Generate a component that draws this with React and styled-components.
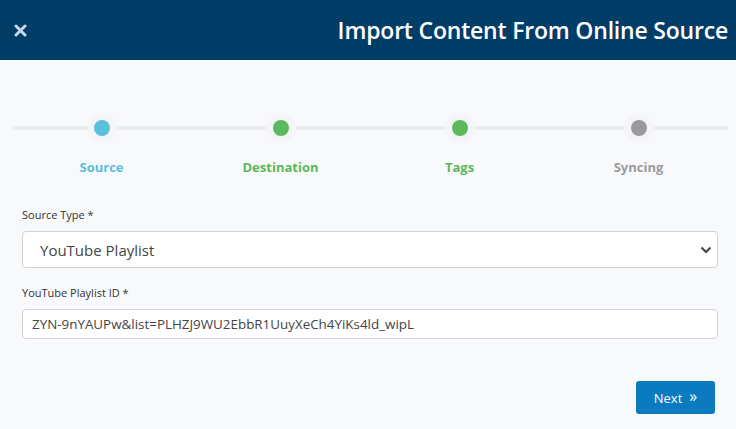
import React, { useState } from "react";
import styled, { createGlobalStyle } from "styled-components";

const GlobalStyle = createGlobalStyle`
  html, body {
    margin: 0;
    padding: 0;
    background: #f8f9fb;
    font-family: "Open Sans", "Noto Sans", sans-serif;
  }
  * { box-sizing: border-box; }
`;

const steps = [
  { label: "Source", color: "#5bc0de" },
  { label: "Destination", color: "#5cb85c" },
  { label: "Tags", color: "#5cb85c" },
  { label: "Syncing", color: "#9a9a9d" },
];

export default function App() {
  const [sourceType, setSourceType] = useState("youtube-playlist");
  const [playlistId, setPlaylistId] = useState(
    "ZYN-9nYAUPw&list=PLHZJ9WU2EbbR1UuyXeCh4YiKs4ld_wipL"
  );

  return (
    <>
      <GlobalStyle />
      <Modal>
        <Header>
          <CloseButton aria-label="close">
            <svg width="13" height="13" viewBox="0 0 13 13">
              <path
                d="M2 2 L11 11 M11 2 L2 11"
                stroke="#c9d8e6"
                strokeWidth="3"
                strokeLinecap="round"
              />
            </svg>
          </CloseButton>
          <Title>Import Content From Online Source</Title>
        </Header>
        <Body>
          <Stepper>
            {steps.map((step) => (
              <Step key={step.label}>
                <Track>
                  <Dot color={step.color} />
                </Track>
                <StepLabel color={step.color}>{step.label}</StepLabel>
              </Step>
            ))}
          </Stepper>
          <Form>
            <Field>
              <Label>Source Type *</Label>
              <SelectWrap>
                <Select
                  value={sourceType}
                  onChange={(e) => setSourceType(e.target.value)}
                >
                  <option value="youtube-playlist">YouTube Playlist</option>
                  <option value="youtube-channel">YouTube Channel</option>
                </Select>
                <Chevron width="12" height="8" viewBox="0 0 12 8">
                  <path
                    d="M1.5 1.5 L6 6 L10.5 1.5"
                    fill="none"
                    stroke="#444"
                    strokeWidth="2"
                  />
                </Chevron>
              </SelectWrap>
            </Field>
            <Field>
              <Label>YouTube Playlist ID *</Label>
              <Input
                type="text"
                value={playlistId}
                onChange={(e) => setPlaylistId(e.target.value)}
              />
            </Field>
          </Form>
          <Footer>
            <NextButton>
              Next <span>»</span>
            </NextButton>
          </Footer>
        </Body>
      </Modal>
    </>
  );
}

const Modal = styled.div`
  width: 736px;
  height: 429px;
  background: #f8f9fb;
  display: flex;
  flex-direction: column;
`;

const Header = styled.div`
  height: 60px;
  background-color: #023d68;
  display: flex;
  align-items: center;
  justify-content: space-between;
  padding: 0 8px 0 14px;
`;

const CloseButton = styled.button`
  background: none;
  border: none;
  padding: 0;
  display: flex;
  cursor: pointer;
`;

const Title = styled.h1`
  margin: 0;
  color: #ffffff;
  font-size: 23px;
  font-weight: 600;
  letter-spacing: -0.2px;
`;

const Body = styled.div`
  flex: 1;
  display: flex;
  flex-direction: column;
  padding: 0 8px 0 12px;
`;

const Stepper = styled.div`
  display: grid;
  grid-template-columns: repeat(4, 1fr);
  margin-top: 56px;
`;

const Step = styled.div`
  display: flex;
  flex-direction: column;
  align-items: center;
`;

const Track = styled.div`
  width: 100%;
  height: 24px;
  display: flex;
  align-items: center;
  justify-content: center;
  background: linear-gradient(#ecedf0, #ecedf0) center / 100% 4px no-repeat;
`;

const Dot = styled.div`
  width: 16px;
  height: 16px;
  border-radius: 50%;
  background: ${(p) => p.color};
  box-shadow: 0 0 0 7px #f4f5f7;
`;

const StepLabel = styled.div`
  margin-top: 18px;
  font-size: 13px;
  font-weight: 700;
  color: ${(p) => p.color};
`;

const Form = styled.div`
  display: flex;
  flex-direction: column;
  gap: 17px;
  padding: 0 10px;
  margin-top: 31px;
`;

const Field = styled.div`
  display: flex;
  flex-direction: column;
`;

const Label = styled.label`
  font-size: 11px;
  color: #333;
  margin-bottom: 9px;
`;

const SelectWrap = styled.div`
  position: relative;
`;

const Select = styled.select`
  appearance: none;
  width: 100%;
  height: 37px;
  border: 1px solid #cfd3d8;
  border-radius: 4px;
  background: #fff;
  font-family: inherit;
  font-size: 15px;
  color: #444;
  padding: 0 30px 0 17px;
  outline: none;
`;

const Chevron = styled.svg`
  position: absolute;
  right: 6px;
  top: 15px;
  pointer-events: none;
`;

const Input = styled.input`
  width: 100%;
  height: 30px;
  border: 1px solid #cfd3d8;
  border-radius: 4px;
  background: #fff;
  font-family: inherit;
  font-size: 13.4px;
  color: #444;
  padding: 0 9px;
  outline: none;
`;

const Footer = styled.div`
  display: flex;
  justify-content: flex-end;
  padding: 0 13px 0 0;
  margin-top: 42px;
`;

const NextButton = styled.button`
  width: 79px;
  height: 33px;
  background: #0a7bc1;
  color: #fff;
  border: none;
  border-radius: 3px;
  font-family: inherit;
  font-size: 13px;
  display: flex;
  align-items: center;
  justify-content: center;
  gap: 7px;
  cursor: pointer;
  span {
    font-size: 16px;
    margin-top: -3px;
  }
`;
